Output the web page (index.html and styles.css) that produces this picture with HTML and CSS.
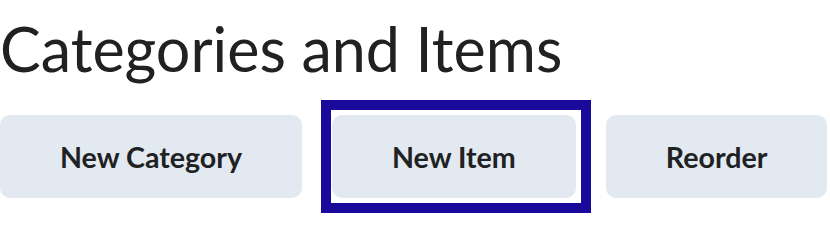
FILE: index.html
```html
<!DOCTYPE html>
<html lang="en">
<head>
<meta charset="utf-8">
<title>Categories and Items</title>
<link rel="stylesheet" href="styles.css">
</head>
<body>
<main class="page">
  <h1 class="title">Categories and Items</h1>
  <div class="actions">
    <button class="btn" type="button">New Category</button>
    <button class="btn btn-focus" type="button">New Item</button>
    <button class="btn" type="button">Reorder</button>
  </div>
</main>
</body>
</html>
```

FILE: styles.css
```css
html, body {
  margin: 0;
  padding: 0;
  background: #ffffff;
  overflow: hidden;
}
.page {
  font-family: Lato, "Open Sans", sans-serif;
  color: #202122;
  padding-bottom: 20px;
}
.title {
  margin: 12px 0 0 0;
  font-size: 61px;
  font-weight: 400;
  line-height: 1.2;
  letter-spacing: 0;
}
.actions {
  display: flex;
  gap: 30px;
  margin-top: 30px;
}
.btn {
  position: relative;
  flex: 0 0 auto;
  overflow: visible;
  height: 83px;
  padding: 0 60px;
  border: none;
  border-radius: 10px;
  background: #e3e9f1;
  color: #202122;
  font-family: Lato, "Open Sans", sans-serif;
  font-size: 28.6px;
  font-weight: 700;
  white-space: nowrap;
}
.btn-focus::after {
  content: "";
  position: absolute;
  top: -15px;
  bottom: -15px;
  left: -11px;
  right: -15px;
  border: 10px solid #1a0a9b;
  pointer-events: none;
}
```
